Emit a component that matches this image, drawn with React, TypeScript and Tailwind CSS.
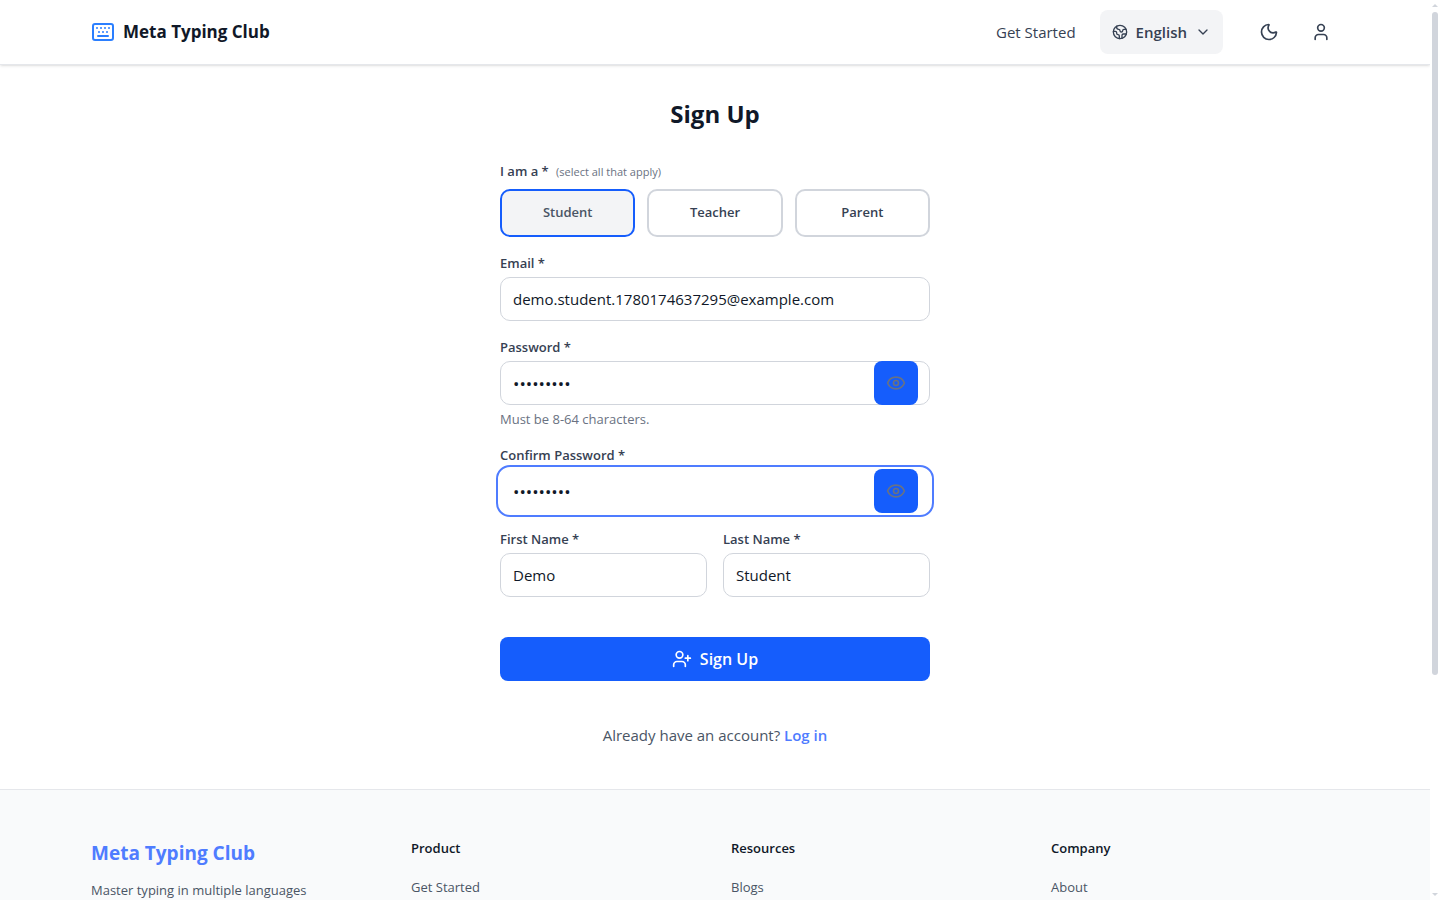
import { useState } from 'react';
import type { ReactNode } from 'react';
import { ChevronDown, Earth, Eye, Keyboard, Moon, User, UserPlus } from 'lucide-react';

const roles = ['Student', 'Teacher', 'Parent'];

const footerColumns = [
    { title: 'Product', link: 'Get Started' },
    { title: 'Resources', link: 'Blogs' },
    { title: 'Company', link: 'About' },
];

const boxClass = 'h-11 w-full rounded-[10px] border bg-white px-3 text-gray-900 outline-none';
const inputClass = `${boxClass} border-gray-300 text-[15px]`;

function Header() {
    return (
        <header className="relative border-b border-gray-200 bg-white shadow-sm">
            <div className="mx-auto flex h-16 max-w-7xl items-center justify-between px-4">
                <a href="#" className="flex items-center gap-2 text-[17px] font-bold text-gray-900">
                    <Keyboard className="h-6 w-6 text-blue-500" />
                    Meta Typing Club
                </a>
                <nav className="-mr-1 flex items-center gap-6 text-gray-700">
                    <a href="#" className="text-[15px]">Get Started</a>
                    <button type="button" className="flex h-11 items-center gap-2 rounded-lg bg-gray-100 px-3 text-[15px] font-semibold">
                        <Earth className="h-4 w-4" />
                        English
                        <ChevronDown className="h-4 w-4" />
                    </button>
                    <div className="flex items-center gap-2">
                        <button type="button" aria-label="Dark mode" className="flex h-11 w-11 items-center justify-center">
                            <Moon className="h-5 w-5" />
                        </button>
                        <button type="button" aria-label="Account" className="flex h-11 w-11 items-center justify-center">
                            <User className="h-5 w-5" />
                        </button>
                    </div>
                </nav>
            </div>
        </header>
    );
}

interface FieldProps {
    id: string;
    label: string;
    children: ReactNode;
}

function Field({ id, label, children }: FieldProps) {
    return (
        <div>
            <label htmlFor={id} className="mb-1 block text-[13px] leading-5 font-semibold text-gray-700">{label} *</label>
            {children}
        </div>
    );
}

function PasswordInput({ id, focused }: { id: string; focused?: boolean }) {
    const [visible, setVisible] = useState(false);

    return (
        <div className={focused ? 'relative rounded-[10px] outline-2 outline-offset-2 outline-[#4f7cff]' : 'relative'}>
            <input
                id={id}
                type={visible ? 'text' : 'password'}
                defaultValue="Demo12345"
                className={`${boxClass} text-[17px] ${focused ? 'border-transparent' : 'border-gray-300'}`}
            />
            <button
                type="button"
                aria-label="Show password"
                onClick={() => setVisible(!visible)}
                className="absolute top-0 right-3 flex h-11 w-11 items-center justify-center rounded-lg bg-[#155dfc] text-gray-500"
            >
                <Eye className="h-5 w-5" />
            </button>
        </div>
    );
}

function SignUpForm() {
    const [selected, setSelected] = useState(['Student']);

    const toggleRole = (role: string) => {
        setSelected(selected.includes(role) ? selected.filter((r) => r !== role) : [...selected, role]);
    };

    return (
        <main className="mx-auto w-full max-w-[462px] px-4 pt-8 pb-10">
            <h1 className="mb-[30px] text-center text-[24px] leading-[34px] font-bold text-gray-900">Sign Up</h1>

            <form className="space-y-4" onSubmit={(e) => e.preventDefault()}>
                <fieldset>
                    <legend className="mb-[7px] text-[13px] leading-5 font-semibold text-gray-700">
                        I am a * <span className="ml-1 text-[11px] font-normal text-gray-500">(select all that apply)</span>
                    </legend>
                    <div className="grid grid-cols-3 gap-3">
                        {roles.map((role) => (
                            <button
                                key={role}
                                type="button"
                                aria-pressed={selected.includes(role)}
                                onClick={() => toggleRole(role)}
                                className={
                                    selected.includes(role)
                                        ? 'h-12 rounded-[10px] border-2 border-[#155dfc] bg-gray-100 text-[13px] font-semibold text-gray-600'
                                        : 'h-12 rounded-[10px] border-2 border-gray-300 bg-white text-[13px] font-semibold text-gray-700'
                                }
                            >
                                {role}
                            </button>
                        ))}
                    </div>
                </fieldset>

                <Field id="email" label="Email">
                    <input id="email" type="email" defaultValue="demo.student.1780174637295@example.com" className={inputClass} />
                </Field>

                <Field id="password" label="Password">
                    <PasswordInput id="password" />
                    <p className="mt-1 text-[13px] leading-5 text-gray-500">Must be 8-64 characters.</p>
                </Field>

                <Field id="confirm-password" label="Confirm Password">
                    <PasswordInput id="confirm-password" focused />
                </Field>

                <div className="grid grid-cols-2 gap-4">
                    <Field id="first-name" label="First Name">
                        <input id="first-name" type="text" defaultValue="Demo" className={inputClass} />
                    </Field>
                    <Field id="last-name" label="Last Name">
                        <input id="last-name" type="text" defaultValue="Student" className={inputClass} />
                    </Field>
                </div>

                <button
                    type="submit"
                    className="mt-10 flex h-11 w-full items-center justify-center gap-2 rounded-lg bg-[#155dfc] text-[16px] font-semibold text-white"
                >
                    <UserPlus className="h-5 w-5" />
                    Sign Up
                </button>
            </form>

            <p className="mt-10 text-center text-[15px] leading-7 text-gray-600">
                Already have an account? <a href="#" className="font-semibold text-[#4f7cff]">Log in</a>
            </p>
        </main>
    );
}

function Footer() {
    return (
        <footer className="border-t border-gray-200 bg-gray-50">
            <div className="mx-auto grid max-w-7xl grid-cols-4 gap-8 px-4 py-12">
                <div>
                    <h2 className="mb-3 text-[19px] leading-[30px] font-bold text-[#4f7cff]">Meta Typing Club</h2>
                    <p className="text-[13px] leading-5 text-gray-600">Master typing in multiple languages</p>
                </div>
                {footerColumns.map((column) => (
                    <div key={column.title}>
                        <h3 className="mb-4 text-[13px] leading-5 font-semibold text-gray-900">{column.title}</h3>
                        <a href="#" className="text-[13px] leading-6 text-gray-600">{column.link}</a>
                    </div>
                ))}
            </div>
        </footer>
    );
}

function ScrollRail() {
    return (
        <div aria-hidden="true" className="flex w-[10px] shrink-0 flex-col items-center justify-between bg-white py-1 text-gray-300">
            <svg viewBox="0 0 6 3" className="h-[3px] w-[6px] fill-current"><path d="M0 3 3 0l3 3z" /></svg>
            <div className="mt-[5px] mb-2 w-[6px] flex-1">
                <div className="h-[76%] rounded-full bg-gray-300" />
            </div>
            <svg viewBox="0 0 6 3" className="h-[3px] w-[6px] fill-current"><path d="M0 0h6L3 3z" /></svg>
        </div>
    );
}

function App() {
    return (
        <div className="flex h-screen bg-white font-['Segoe_UI','Open_Sans',sans-serif]">
            <div className="flex-1 overflow-y-auto [scrollbar-width:none]">
                <Header />
                <SignUpForm />
                <Footer />
            </div>
            <ScrollRail />
        </div>
    );
}

export default App;
